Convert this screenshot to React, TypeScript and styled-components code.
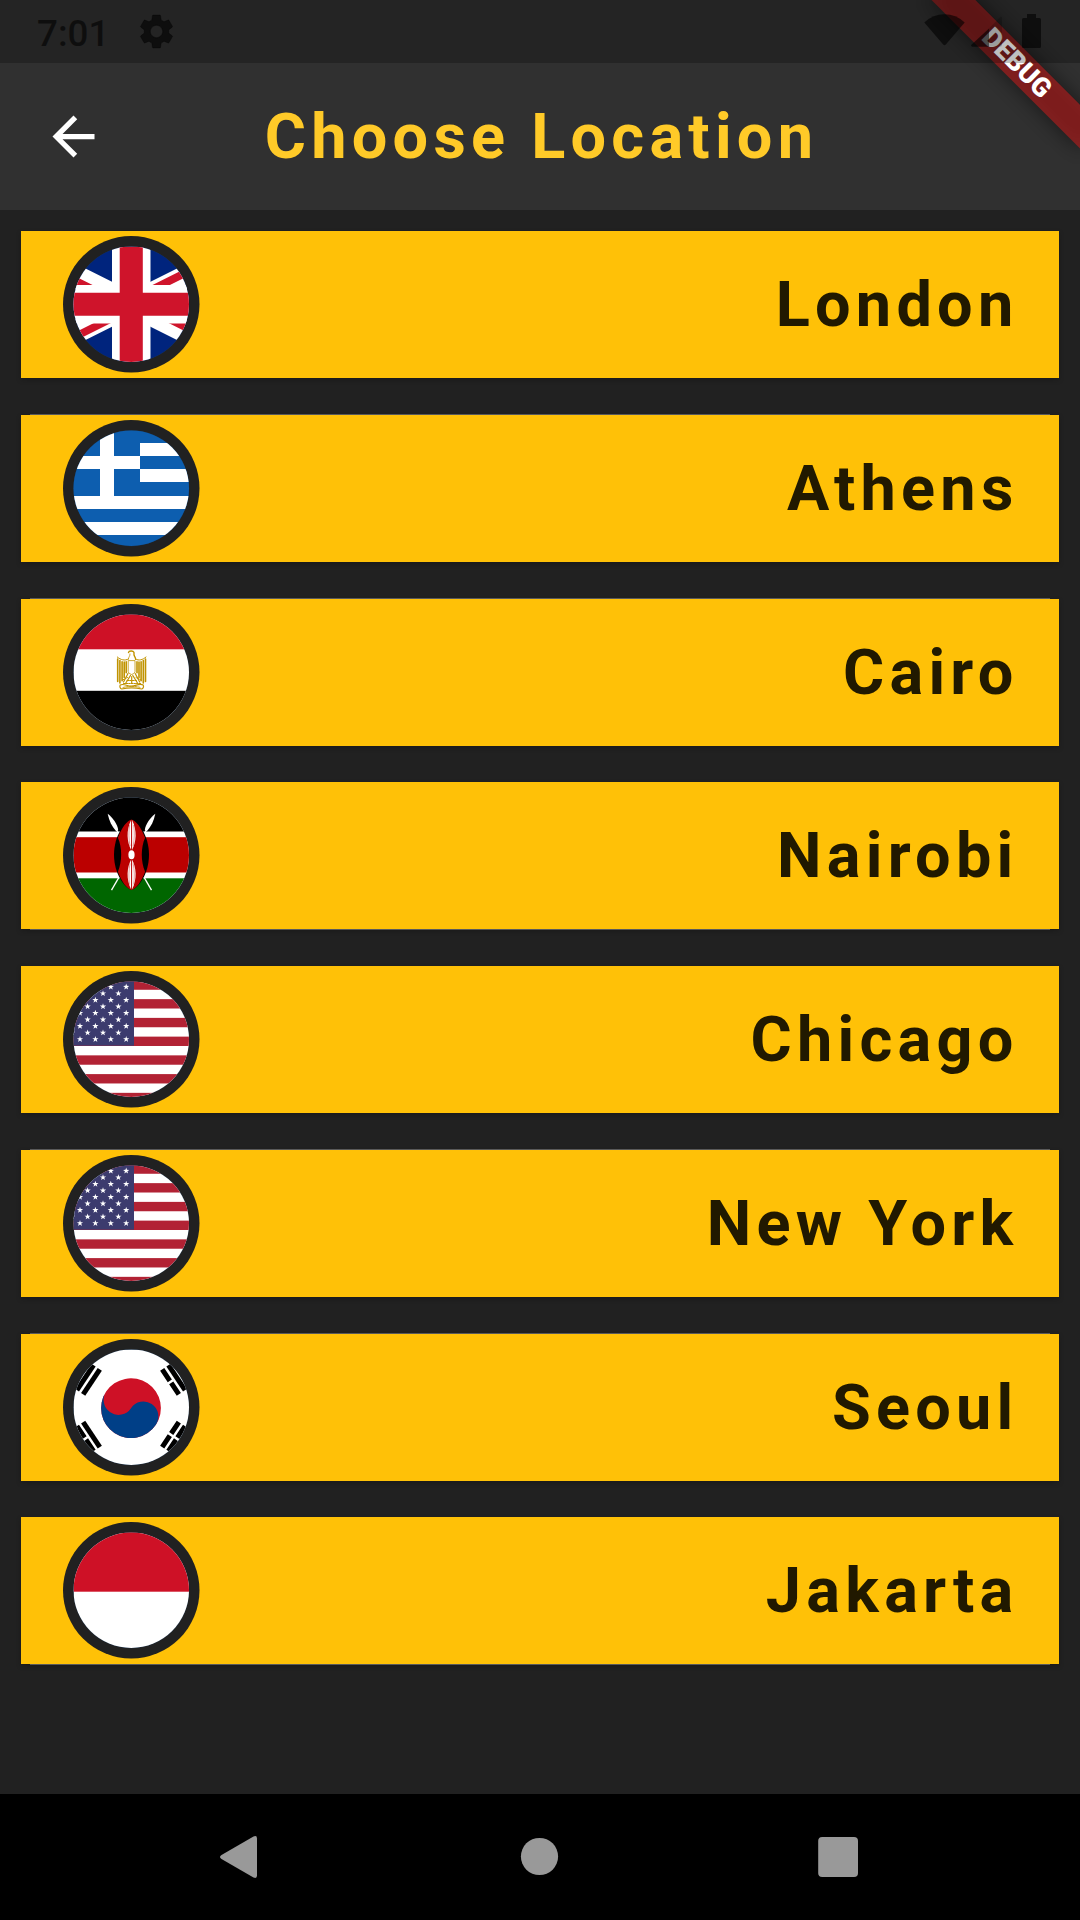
import React from "react";
import styled, { createGlobalStyle } from "styled-components";

const GlobalStyle = createGlobalStyle`
  html, body { margin: 0; padding: 0; background: #212121; }
  *, *::before, *::after { box-sizing: border-box; }
`;

const Screen = styled.div`
  position: relative;
  display: flex;
  flex-direction: column;
  width: 1080px;
  height: 1920px;
  overflow: hidden;
  background: #212121;
  font-family: Roboto, "Liberation Sans", sans-serif;
`;

const StatusBar = styled.div`
  position: absolute;
  top: 0;
  left: 0;
  right: 0;
  z-index: 3;
  display: flex;
  align-items: center;
  justify-content: space-between;
  height: 63px;
  padding: 0 38px 0 37px;
  background: rgba(0, 0, 0, 0.25);
  color: rgba(0, 0, 0, 0.6);
`;

const StatusGroup = styled.div`
  display: flex;
  align-items: center;
  gap: 27px;
`;

const Clock = styled.span`
  font-size: 36.75px;
  font-weight: 500;
  line-height: 63px;
  padding-top: 4px;
`;

const AppBar = styled.header`
  flex: none;
  display: grid;
  grid-template-columns: 147px 1fr 147px;
  align-items: center;
  height: 210px;
  padding-top: 63px;
  background: #303030;
`;

const BackButton = styled.button`
  display: flex;
  align-items: center;
  justify-content: center;
  height: 147px;
  padding: 0;
  border: 0;
  background: none;
  color: #fff;
`;

const Title = styled.h1`
  margin: 0;
  padding-left: 3px;
  text-align: center;
  white-space: nowrap;
  font-size: 63px;
  font-weight: 700;
  line-height: 74px;
  letter-spacing: 5.25px;
  color: #ffca28;
`;

const RibbonAnchor = styled.div`
  position: absolute;
  top: 0;
  right: 0;
  z-index: 2;
  width: 0;
  height: 0;
  transform: rotate(45deg);
`;

const Ribbon = styled.div`
  position: absolute;
  top: 73.5px;
  left: -105px;
  width: 210px;
  height: 31.5px;
  background: rgba(183, 28, 28, 0.627);
  color: #fff;
  font-size: 26.775px;
  font-weight: 900;
  line-height: 31.5px;
  text-align: center;

  &::before {
    content: "";
    position: absolute;
    inset: 0;
    z-index: -1;
    background: rgba(0, 0, 0, 0.5);
    filter: blur(10.4px);
  }
`;

const List = styled.main`
  flex: 1;
  display: flex;
  flex-direction: column;
  gap: 36.75px;
  padding: 21px;
`;

const Card = styled.div<{ $edge?: "top" | "bottom" }>`
  position: relative;
  flex: none;
  display: flex;
  align-items: center;
  justify-content: space-between;
  height: 147px;
  padding: 0 40.5px 0 42px;
  background: #ffc107;
  box-shadow: 0 2px 5px rgba(0, 0, 0, 0.22);

  &::after {
    content: "";
    display: ${(p) => (p.$edge ? "block" : "none")};
    position: absolute;
    left: 9px;
    right: 9px;
    height: 1px;
    ${(p) => (p.$edge === "bottom" ? "bottom: -1px;" : "top: -1px;")}
    background: #5a5a5a;
  }
`;

const City = styled.span`
  padding-top: 1px;
  font-size: 63px;
  font-weight: 700;
  line-height: 74px;
  letter-spacing: 5.25px;
  color: #211900;
`;

const NavBar = styled.nav`
  flex: none;
  display: flex;
  align-items: center;
  justify-content: center;
  height: 126px;
  background: #000;
  color: #999;
`;

const NavButton = styled.span`
  display: flex;
  justify-content: center;
  width: 300px;
`;

const RED = "#ce1126";

function UnitedKingdom() {
  return (
    <svg x="-57.75" y="0" width="231" height="115.5" viewBox="0 0 60 30">
      <clipPath id="uk-tri">
        <path d="M30 15h30v15zv15H0zH0V0zV0h30z" />
      </clipPath>
      <path fill="#00247d" d="M0 0h60v30H0z" />
      <path d="M0 0l60 30M60 0L0 30" stroke="#fff" strokeWidth="6" />
      <path d="M0 0l60 30M60 0L0 30" clipPath="url(#uk-tri)" stroke="#cf142b" strokeWidth="4" />
      <path d="M30 0v30M0 15h60" stroke="#fff" strokeWidth="10" />
      <path d="M30 0v30M0 15h60" stroke="#cf142b" strokeWidth="6" />
    </svg>
  );
}

function Greece() {
  const s = 13.2;
  const top = -1;
  return (
    <g shapeRendering="crispEdges">
      <rect x="-5" y="-5" width="126" height="126" fill="#0d5eaf" />
      {[1, 3, 5, 7].map((i) => (
        <rect key={i} x={i < 5 ? 66.6 : -5} y={top + i * s} width="126" height={s} fill="#fff" />
      ))}
      <rect x="26.8" y="-5" width="13.2" height={5 + top + 5 * s} fill="#fff" />
      <rect x="-5" y={top + 2 * s} width="71.6" height={s} fill="#fff" />
    </g>
  );
}

function Egypt() {
  return (
    <g>
      <rect width="116" height="116" fill="#fff" />
      <rect y="-2" width="116" height="36.8" fill={RED} />
      <rect y="76.3" width="116" height="41" fill="#000" />
      <g fill="none" stroke="#c09300" strokeLinecap="round" strokeLinejoin="round">
        <path strokeWidth="1.4" d="M55 38c.3-1.8 4.5-2.2 5.4-.2.3 1-.1 1.6.2 3 .5 1.7 2 2.6 1.5 4" />
        <path strokeWidth="0.8" d="M56.5 39.5c.3 2-1.500 3-1.700 5" />
        <path strokeWidth="1" d="M55 44.500c-4 2-7.500 1-11.200-2M61.800 44.500c4 2 7 1 10.700-2" />
        <path strokeWidth="1.600" d="M44.200 44.500V67M46.400 46v22.500M48.600 47.200v19M50.700 47.600V63M52.700 47.200v11M72 44.500V67M69.800 46v22.500M67.600 47.200v19M65.500 47.600V63M63.500 47.200v11" />
        <path strokeWidth="0.8" d="M54.700 46.500v10.500c0 2 3.400 3 3.400 3s3.400-1 3.400-3V46.500z" />
        <path strokeWidth="1.200" d="M54.500 59l-4.500 8.500M57 61l-5 8M59.300 61l5 8M61.700 59l4.500 8.500M58.200 62v7" />
        <path strokeWidth="1" strokeDasharray="1.6 1" d="M49 65.500l5-2.500M67.500 65.500l-5-2.500M53.500 66h9.500M50 69h17" />
        <path strokeWidth="1.2" d="M46.700 70.500c3.500-2 7 1.500 11.500 1.200s8-3.200 11.500-1.200c.8 1.800 0 3.700-1.500 4-6-1.400-14-1.400-20 0-1.500-.3-2.300-2.200-1.500-4z" />
        <path strokeWidth="0.9" strokeDasharray="2 1" d="M49.500 73c5-1.500 12.500-1.500 17.500 0" />
      </g>
    </g>
  );
}

function Kenya() {
  return (
    <g>
      <rect width="116" height="116" fill="#fff" />
      <rect y="-2" width="116" height="36" fill="#000" />
      <rect y="39.7" width="116" height="35.3" fill="#b00" />
      <rect y="80.8" width="116" height="36" fill="#060" />
      {[1, -1].map((d) => (
        <g key={d} transform={`translate(58 57.2) scale(${d} 1)`}>
          <path d="M-20 35.5L18 -30" stroke="#fff" strokeWidth="1.3" />
          <path d="M23.8-41C19-37 14-31 13.3-24.5l2 1C19.5-28 22.5-34 23.8-41z" fill="#fff" />
        </g>
      ))}
      <path d="M58 22C51.5 23.5 40.5 38 40.5 57.2S51.5 91 58 92.4C64.5 91 75.5 76.5 75.5 57.2S64.5 23.5 58 22z" fill="#000" />
      <path d="M58 22c-4.5 1-10 8.5-13.6 18.2C48.8 50 48.8 64 44.4 74.2 48 84 53.5 91.4 58 92.4c4.5-1 10-8.4 13.6-18.2-4.4-10.200-4.400-24.200 0-34C68 30.500 62.500 23 58 22z" fill="#b00" />
      <g fill="#fff">
        <ellipse cx="58" cy="57.2" rx="3.1" ry="4.5" />
        <path d="M57.6 22.5c-2.6 5-3.6 11-3.5 16 .1 5.5 1.7 10.5 3.5 14zM58.6 22.5c2.6 5 3.6 11 3.5 16-.1 5.5-1.7 10.5-3.5 14zM57.6 92c-2.6-5-3.6-11-3.5-16 .1-5.5 1.7-10.5 3.5-14zM58.6 92c2.6-5 3.6-11 3.5-16-.1-5.5-1.7-10.5-3.5-14z" />
      </g>
      <path d="M56 27.5c-.9 7-.8 14 .5 21M60.2 27.5c.9 7 .8 14-.5 21M56 87c-.9-7-.8-14 .5-21M60.2 87c.9-7 .8-14-.5-21" fill="none" stroke="#b00" strokeWidth="0.4" />
    </g>
  );
}

const starPoints = Array.from({ length: 10 }, (_, i) => {
  const r = i % 2 ? 1.3 : 3.3;
  const a = (Math.PI / 5) * i - Math.PI / 2;
  return `${(r * Math.cos(a)).toFixed(2)},${(r * Math.sin(a)).toFixed(2)}`;
}).join(" ");

function UnitedStates() {
  const s = 9.37;
  const stars: [number, number][] = [];
  for (let row = 0; row < 9; row++) {
    for (let col = 0; col < 4; col++) {
      stars.push([(row % 2 ? 44.9 : 52.7) - col * 15.4, 5.4 + row * 6.54]);
    }
  }
  return (
    <g>
      <rect width="116" height="116" fill="#fff" />
      {[0, 2, 4, 6, 8, 10, 12].map((i) => (
        <rect key={i} y={-1.1 + i * s} width="116" height={s} fill="#b22234" />
      ))}
      <rect y="-2" width="60.5" height="66.2" fill="#3c3b6e" />
      {stars.map(([x, y]) => (
        <polygon key={`${x}-${y}`} points={starPoints} transform={`translate(${x} ${y})`} fill="#fff" />
      ))}
    </g>
  );
}

const trigrams: { angle: number; broken: boolean[] }[] = [
  { angle: 213.69, broken: [false, false, false] },
  { angle: -33.69, broken: [true, false, true] },
  { angle: 146.31, broken: [false, true, false] },
  { angle: 33.69, broken: [true, true, true] },
];

function SouthKorea() {
  return (
    <g>
      <rect width="116" height="116" fill="#fff" />
      <g transform="translate(57.5 58.7)">
        <g transform="rotate(33.69)">
          <circle r="29.9" fill={RED} />
          <path d="M-29.9 0A14.95 14.95 0 0 0 0 0A14.95 14.95 0 0 1 29.9 0A29.9 29.9 0 0 1 -29.9 0z" fill="#003f87" />
        </g>
        {trigrams.map(({ angle, broken }) => (
          <g key={angle} transform={`rotate(${angle})`}>
            {broken.map((b, i) => (
              <path
                key={i}
                d={b ? "M0-15V-1.25M0 1.25V15" : "M0-15V15"}
                transform={`translate(${47.5 + i * 7.5} 0)`}
                stroke="#000"
                strokeWidth="5"
              />
            ))}
          </g>
        ))}
      </g>
    </g>
  );
}

function Indonesia() {
  return (
    <g>
      <rect width="116" height="116" fill="#fff" />
      <rect y="-2" width="116" height="61.2" fill={RED} />
    </g>
  );
}

function Avatar({ id, children }: { id: string; children: React.ReactNode }) {
  return (
    <svg width="137" height="137" viewBox="0 0 137 137">
      <clipPath id={`clip-${id}`}>
        <circle cx="57.75" cy="57.75" r="57.75" />
      </clipPath>
      <circle cx="68.25" cy="68.25" r="68.25" fill="#212121" />
      <g transform="translate(10.5 10.5)">
        <circle cx="57.75" cy="57.75" r="57.9" fill="#1c3550" />
        <g clipPath={`url(#clip-${id})`}>{children}</g>
      </g>
    </svg>
  );
}

const locations: { city: string; Flag: React.FC; edge?: "top" | "bottom" }[] = [
  { city: "London", Flag: UnitedKingdom },
  { city: "Athens", Flag: Greece, edge: "top" },
  { city: "Cairo", Flag: Egypt, edge: "top" },
  { city: "Nairobi", Flag: Kenya, edge: "bottom" },
  { city: "Chicago", Flag: UnitedStates },
  { city: "New York", Flag: UnitedStates, edge: "top" },
  { city: "Seoul", Flag: SouthKorea, edge: "top" },
  { city: "Jakarta", Flag: Indonesia, edge: "bottom" },
];

const GEAR =
  "M19.14,12.94c0.04-0.3,0.06-0.61,0.06-0.94c0-0.32-0.02-0.64-0.07-0.94l2.03-1.58c0.18-0.14,0.23-0.41,0.12-0.61l-1.92-3.32c-0.12-0.22-0.37-0.29-0.59-0.22l-2.39,0.96c-0.5-0.38-1.03-0.7-1.62-0.94L14.4,2.81c-0.04-0.24-0.24-0.41-0.48-0.41h-3.84c-0.24,0-0.43,0.17-0.47,0.41L9.25,5.35C8.66,5.59,8.12,5.92,7.63,6.29L5.24,5.33c-0.22-0.08-0.47,0-0.59,0.22L2.74,8.87C2.62,9.08,2.66,9.34,2.86,9.48l2.03,1.58C4.84,11.36,4.8,11.69,4.8,12s0.02,0.64,0.07,0.94l-2.03,1.58c-0.18,0.14-0.23,0.41-0.12,0.61l1.92,3.32c0.12,0.22,0.37,0.29,0.59,0.22l2.39-0.96c0.5,0.38,1.03,0.7,1.62,0.94l0.36,2.54c0.05,0.24,0.24,0.41,0.48,0.41h3.84c0.24,0,0.44-0.17,0.47-0.41l0.36-2.54c0.59-0.24,1.13-0.56,1.62-0.94l2.39,0.96c0.22,0.08,0.47,0,0.59-0.22l1.92-3.32c0.12-0.22,0.07-0.47-0.12-0.61L19.14,12.94z M12,15.6c-1.98,0-3.6-1.62-3.6-3.6s1.62-3.6,3.6-3.6s3.6,1.62,3.6,3.6S13.98,15.6,12,15.6z";

export default function App() {
  return (
    <Screen>
      <GlobalStyle />
      <StatusBar>
        <StatusGroup>
          <Clock>7:01</Clock>
          <svg width="41" height="41" viewBox="0 0 24 24" fill="currentColor">
            <path d={GEAR} stroke="currentColor" strokeWidth="0.3" />
          </svg>
        </StatusGroup>
        <svg width="118" height="63" viewBox="924 0 118 63" fill="currentColor">
          <path d="M924.3 22.5Q933 14.3 944.5 14.3T964.7 22.5L945.8 44.5Q944.5 46 943.2 44.5z" />
          <path d="M989 28.6V46.7H972.2Q970.4 46.3 971.4 44.8z" />
          <path d="M989 28.6L1000 17.2Q1001.8 16 1002 18V45Q1002 46.7 1000.3 46.7H989z" opacity="0.3" />
          <path d="M1027 14h9v4h3.5q1.5 0 1.5 1.5v27q0 1.5-1.5 1.5h-16q-1.5 0-1.5-1.5v-27q0-1.5 1.5-1.5h3.5z" />
        </svg>
      </StatusBar>
      <AppBar>
        <BackButton aria-label="Back">
          <svg width="63" height="63" viewBox="0 0 24 24" fill="currentColor">
            <path d="M20 11H7.83l5.59-5.59L12 4l-8 8 8 8 1.41-1.41L7.83 13H20v-2z" />
          </svg>
        </BackButton>
        <Title>Choose Location</Title>
      </AppBar>
      <RibbonAnchor>
        <Ribbon>DEBUG</Ribbon>
      </RibbonAnchor>
      <List>
        {locations.map(({ city, Flag, edge }) => (
          <Card key={city} $edge={edge}>
            <Avatar id={city.replace(" ", "-")}>
              <Flag />
            </Avatar>
            <City>{city}</City>
          </Card>
        ))}
      </List>
      <NavBar>
        <NavButton>
          <svg width="60" height="60" viewBox="0 0 60 60" fill="currentColor">
            <path d="M11.5 28L43.5 9.5Q47 8 47 11.5V48.5Q47 52 43.5 50.5L11.5 32Q8.5 30 11.5 28z" />
          </svg>
        </NavButton>
        <NavButton>
          <svg width="60" height="60" viewBox="0 0 60 60" fill="currentColor">
            <circle cx="29.5" cy="29.5" r="18.6" />
          </svg>
        </NavButton>
        <NavButton>
          <svg width="60" height="60" viewBox="0 0 60 60" fill="currentColor">
            <rect x="8.2" y="10" width="39.8" height="40" rx="4" />
          </svg>
        </NavButton>
      </NavBar>
    </Screen>
  );
}
